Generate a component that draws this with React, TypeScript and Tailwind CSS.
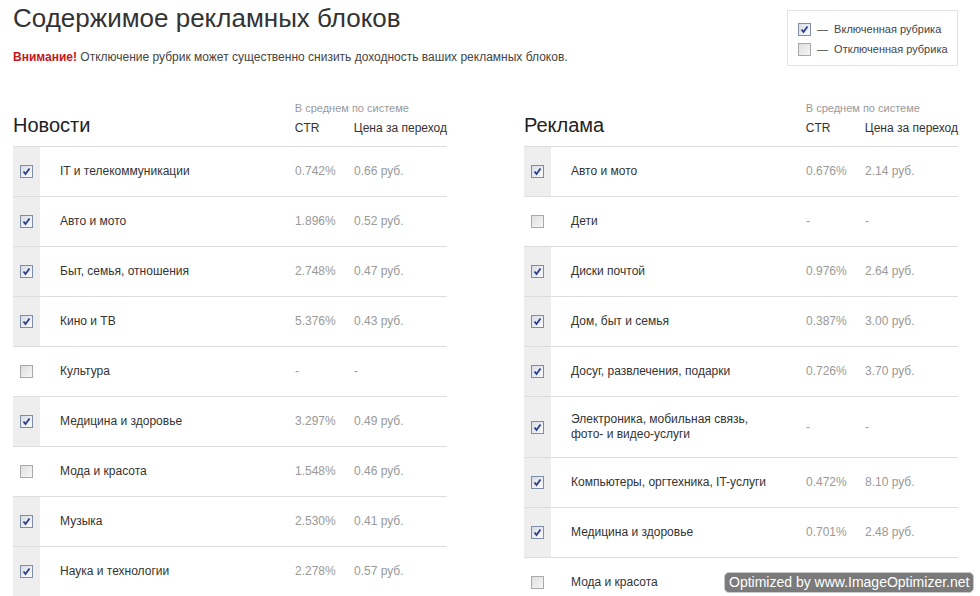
import React from 'react';

type Row = { name: string; ctr: string; price: string; on: boolean };

const NEWS: Row[] = [
  { name: 'IT и телекоммуникации', ctr: '0.742%', price: '0.66 руб.', on: true },
  { name: 'Авто и мото', ctr: '1.896%', price: '0.52 руб.', on: true },
  { name: 'Быт, семья, отношения', ctr: '2.748%', price: '0.47 руб.', on: true },
  { name: 'Кино и ТВ', ctr: '5.376%', price: '0.43 руб.', on: true },
  { name: 'Культура', ctr: '-', price: '-', on: false },
  { name: 'Медицина и здоровье', ctr: '3.297%', price: '0.49 руб.', on: true },
  { name: 'Мода и красота', ctr: '1.548%', price: '0.46 руб.', on: false },
  { name: 'Музыка', ctr: '2.530%', price: '0.41 руб.', on: true },
  { name: 'Наука и технологии', ctr: '2.278%', price: '0.57 руб.', on: true },
];

const ADS: Row[] = [
  { name: 'Авто и мото', ctr: '0.676%', price: '2.14 руб.', on: true },
  { name: 'Дети', ctr: '-', price: '-', on: false },
  { name: 'Диски почтой', ctr: '0.976%', price: '2.64 руб.', on: true },
  { name: 'Дом, быт и семья', ctr: '0.387%', price: '3.00 руб.', on: true },
  { name: 'Досуг, развлечения, подарки', ctr: '0.726%', price: '3.70 руб.', on: true },
  { name: 'Электроника, мобильная связь, фото- и видео-услуги', ctr: '-', price: '-', on: true },
  { name: 'Компьютеры, оргтехника, IT-услуги', ctr: '0.472%', price: '8.10 руб.', on: true },
  { name: 'Медицина и здоровье', ctr: '0.701%', price: '2.48 руб.', on: true },
  { name: 'Мода и красота', ctr: '', price: '', on: false },
];

const Checkbox = ({ checked }: { checked: boolean }) => (
  <span
    className={`inline-flex w-[13px] h-[13px] items-center justify-center border ${
      checked
        ? 'border-[#7d8ea6] bg-gradient-to-br from-[#d9dce6] to-[#fbfbfd]'
        : 'border-[#a9a9a9] bg-gradient-to-br from-[#dedede] to-[#f7f7f7]'
    }`}
  >
    {checked && (
      <svg width="9" height="9" viewBox="0 0 9 9">
        <path d="M1.5 4.5 L3.5 7 L7.5 1.5" fill="none" stroke="#2a3d86" strokeWidth="1.8" />
      </svg>
    )}
  </span>
);

const Table = ({ title, rows }: { title: string; rows: Row[] }) => (
  <div className="w-[434px]">
    <div className="h-[47px] border-b border-[#dddddd] flex">
      <div className="w-[282px] pt-[14px] text-[20px] leading-[22px] text-[#222]">{title}</div>
      <div className="flex-1 pt-[1px]">
        <div className="text-[11px] leading-[14px] text-[#999]">В среднем по системе</div>
        <div className="flex mt-[6px] text-[12px] leading-[14px] text-[#333]">
          <span className="w-[59px]">CTR</span>
          <span className="whitespace-nowrap">Цена за переход</span>
        </div>
      </div>
    </div>
    {rows.map((r, i) => (
      <div key={i} className="flex border-b border-[#dddddd] min-h-[50px] text-[12px] leading-[15px]">
        <div className={`w-[27px] flex items-center justify-center ${r.on ? 'bg-[#eeeeee]' : ''}`}>
          <Checkbox checked={r.on} />
        </div>
        <div className="w-[255px] pl-[20px] pr-[30px] py-[15px] flex items-center text-[#333]">{r.name}</div>
        <div className="w-[59px] flex items-center text-[#999]">{r.ctr}</div>
        <div className="flex-1 flex items-center text-[#999]">{r.price}</div>
      </div>
    ))}
  </div>
);

export default function App() {
  return (
    <div
      className="relative w-[980px] h-[596px] overflow-hidden bg-white pl-[13px] pt-[3px]"
      style={{ fontFamily: '"Liberation Sans", Arial, sans-serif' }}
    >
      <div className="flex justify-between">
        <div>
          <h1 className="text-[26px] leading-[30px] text-[#333]">Содержимое рекламных блоков</h1>
          <p className="mt-[17px] text-[12px] leading-[14px] text-[#444]">
            <b className="text-[#c4161c]">Внимание!</b> Отключение рубрик может существенно снизить доходность ваших
            рекламных блоков.
          </p>
        </div>
        <div className="mt-[7px] mr-[22px] w-[171px] h-[56px] border border-[#e3e3e3] pl-[10px] pt-[11px] text-[11px] leading-[14px] text-[#444]">
          <div className="flex items-center gap-[6px]">
            <Checkbox checked />
            <span>—&nbsp; Включенная рубрика</span>
          </div>
          <div className="flex items-center gap-[6px] mt-[6px]">
            <Checkbox checked={false} />
            <span>—&nbsp; Отключенная рубрика</span>
          </div>
        </div>
      </div>

      <div className="flex gap-[77px] mt-[34px]">
        <Table title="Новости" rows={NEWS} />
        <Table title="Реклама" rows={ADS} />
      </div>

      <div className="absolute left-[724px] top-[572px] h-[21px] px-[4px] rounded-[5px] bg-[#7a7a7a] border border-[#c8c8c8] text-white text-[14px] leading-[19px] whitespace-nowrap">
        Optimized by www.ImageOptimizer.net
      </div>
    </div>
  );
}
